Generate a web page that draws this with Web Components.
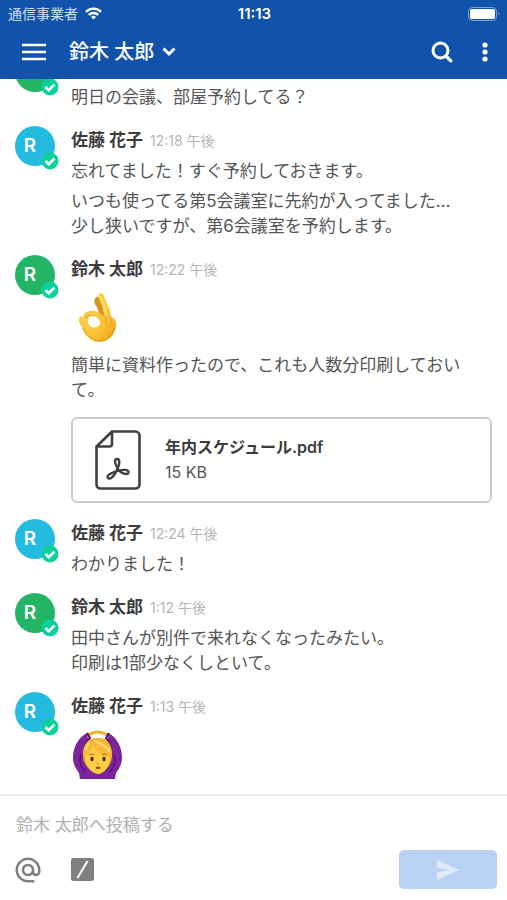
<!DOCTYPE html>
<html lang="ja">
<head>
<meta charset="utf-8">
<meta name="viewport" content="width=device-width, initial-scale=1">
<title>鈴木 太郎</title>
<style>
html, body { margin: 0; height: 100%; }
body { font-family: Inter, "Noto Sans CJK JP", sans-serif; font-size: 17px; line-height: 25px; color: #555; background: #fff; }
</style>
</head>
<body>
<chat-app>
  <status-bar slot="top">
    <span slot="carrier">通信事業者</span>
    <span slot="clock">11:13</span>
  </status-bar>
  <channel-header slot="top">鈴木 太郎</channel-header>
  <chat-message color="#22b565">
    <chat-text>明日の会議、部屋予約してる？</chat-text>
  </chat-message>
  <chat-message color="#25bae0">
    <span slot="name">佐藤 花子</span><span slot="time">12:18 午後</span>
    <chat-text>忘れてました！すぐ予約しておきます。</chat-text>
    <chat-text>いつも使ってる第5会議室に先約が入ってました…<br>少し狭いですが、第6会議室を予約します。</chat-text>
  </chat-message>
  <chat-message color="#22b565">
    <span slot="name">鈴木 太郎</span><span slot="time">12:22 午後</span>
    <chat-emoji kind="ok"></chat-emoji>
    <chat-text>簡単に資料作ったので、これも人数分印刷しておいて。</chat-text>
    <file-card><span slot="name">年内スケジュール.pdf</span><span slot="size">15 KB</span></file-card>
  </chat-message>
  <chat-message color="#25bae0">
    <span slot="name">佐藤 花子</span><span slot="time">12:24 午後</span>
    <chat-text>わかりました！</chat-text>
  </chat-message>
  <chat-message color="#22b565">
    <span slot="name">鈴木 太郎</span><span slot="time">1:12 午後</span>
    <chat-text>田中さんが別件で来れなくなったみたい。<br>印刷は1部少なくしといて。</chat-text>
  </chat-message>
  <chat-message color="#25bae0">
    <span slot="name">佐藤 花子</span><span slot="time">1:13 午後</span>
    <chat-emoji kind="woman"></chat-emoji>
  </chat-message>
  <message-composer slot="bottom" placeholder="鈴木 太郎へ投稿する"></message-composer>
</chat-app>

<script>
const define = (name, html, setup) => customElements.define(name, class extends HTMLElement {
  constructor() {
    super();
    this.attachShadow({ mode: "open" });
  }
  connectedCallback() {
    this.shadowRoot.innerHTML = html;
    if (setup) setup(this, this.shadowRoot);
  }
});

define("chat-app", `
<style>
:host { display: flex; flex-direction: column; height: 100vh; }
main { flex: 1; min-height: 0; overflow: hidden; display: flex; flex-direction: column; justify-content: flex-end; }
</style>
<slot name="top"></slot><main><slot></slot></main><slot name="bottom"></slot>`);

define("status-bar", `
<style>
:host { display: grid; grid-template-columns: 1fr auto 1fr; align-items: center; height: 27px; padding: 0 6px 0 8px; background: #1153ab; color: #fff; font-size: 14px; line-height: 20px; }
.left { display: flex; align-items: center; gap: 7px; color: #d3e0f2; }
.clock { font-weight: 600; font-size: 15px; }
.battery { justify-self: end; display: block; }
svg { display: block; }
</style>
<div class="left"><slot name="carrier"></slot>
<svg width="17" height="13" viewBox="0 0 17 13" fill="none" stroke="#fff" stroke-width="2.400"><path d="M1 4.800a10.500 10.500 0 0 1 15 0M3.800 8a6.500 6.500 0 0 1 9.400 0"/><path d="M8.500 12.500 6 9.900a3.700 3.700 0 0 1 5 0z" fill="#fff" stroke="none"/></svg></div>
<div class="clock"><slot name="clock"></slot></div>
<svg class="battery" width="33" height="14" viewBox="0 0 33 14"><rect x=".5" y=".5" width="28" height="13" rx="4" fill="none" stroke="#7fa3d3"/><rect x="2" y="2" width="25" height="10" rx="2" fill="#fff"/><path d="M30.500 5q2 2 0 4z" fill="#7fa3d3"/></svg>`);

define("channel-header", `
<style>
:host { display: flex; align-items: center; height: 52px; padding: 0 7px 2px 14px; box-sizing: border-box; background: #1153ab; color: #fff; }
button { display: flex; align-items: center; justify-content: center; padding: 0; border: 0; background: none; color: inherit; font: inherit; height: 40px; width: 40px; }
.title { width: auto; margin-left: 15px; gap: 8px; font-size: 20px; line-height: 28px; font-weight: 500; }
.search { margin-left: auto; }
.more { width: 30px; margin-left: 8px; }
</style>
<button aria-label="メニュー"><svg width="24" height="18" viewBox="0 0 24 18" stroke="#fff" stroke-width="2.600"><path d="M0 2h24M0 9h24M0 16h24"/></svg></button>
<button class="title"><slot></slot><svg width="14" height="10" viewBox="0 0 14 10" fill="none" stroke="#fff" stroke-width="3"><path d="m1.500 1.500 5.500 5.500 5.500-5.500"/></svg></button>
<button class="search" aria-label="検索"><svg width="22" height="22" viewBox="0 0 22 22" fill="none" stroke="#fff" stroke-linecap="round"><circle cx="9.500" cy="9.500" r="7.500" stroke-width="3"/><path d="m15 15 4.800 4.800" stroke-width="3.200"/></svg></button>
<button class="more" aria-label="その他"><svg width="6" height="22" viewBox="0 0 6 22" fill="#fff"><circle cx="3" cy="4" r="2.600"/><circle cx="3" cy="11" r="2.600"/><circle cx="3" cy="18" r="2.600"/></svg></button>`);

define("user-avatar", `
<style>
:host { display: block; position: relative; width: 40px; height: 40px; border-radius: 50%; background: var(--avatar-color); }
.letter { display: block; width: 30px; text-align: center; font-size: 19px; line-height: 39px; color: #fff; font-weight: 600; }
svg { position: absolute; right: -4px; bottom: -4px; }
</style>
<span class="letter"><slot></slot></span>
<svg width="18" height="18" viewBox="0 0 18 18"><circle cx="9" cy="9" r="8.500" fill="#09d19b"/><path d="m4.500 9 3.200 3.200 5.800-5.700" fill="none" stroke="#fff" stroke-width="2.700"/></svg>`);

define("chat-message", `
<style>
:host { display: grid; grid-template-columns: 40px minmax(0, 1fr); gap: 16px; flex: none; padding: 0 15px 16px 15px; }
:host(:last-of-type) { padding-bottom: 9px; }
header { display: flex; align-items: center; gap: 7px; height: 28px; margin-bottom: 5px; }
.name { color: #3c3c3f; font-weight: 700; }
.time { color: #b5b5b5; font-size: 14px; }
.content { display: flex; flex-direction: column; gap: 5px; }
</style>
<user-avatar></user-avatar>
<article><header><span class="name"><slot name="name"></slot></span><span class="time"><slot name="time"></slot></span></header><div class="content"><slot></slot></div></article>`,
(host, root) => {
  host.style.setProperty("--avatar-color", host.getAttribute("color"));
  if (host.querySelector("[slot=name]")) root.querySelector("user-avatar").textContent = "R";
});

define("chat-text", `<style>:host { display: block; }</style><slot></slot>`);

define("file-card", `
<style>
:host { display: flex; align-items: center; gap: 24px; height: 86px; box-sizing: border-box; margin-top: 9px; padding: 0 22px; border: 2px solid #cbcbcb; border-radius: 6px; }
svg { flex: none; }
.name { color: #3c3c3f; font-weight: 600; font-size: 16px; }
.size { font-size: 16px; }
</style>
<svg width="46" height="60" viewBox="0 0 46 60" fill="none" stroke="#3f3f42" stroke-linejoin="round">
<path d="M17 1.500h23.500a4 4 0 0 1 4 4v49a4 4 0 0 1-4 4h-35a4 4 0 0 1-4-4V16.500zV14a2.500 2.500 0 0 1-2.500 2.500h-13" stroke-width="2.600"/>
<path d="M22.500 37.500C19.500 33.500 19 29 22 29s3 4 .5 10c-2.500 6-6.500 10.500-9 9.500-3-1.500 1-5.500 7.500-7.200 7-1.800 12-2.300 12.500.8.400 3-5.500 2.500-9.500-1.500-2-2-2.500-3.500-2-5" stroke-width="2.400"/>
</svg>
<div><div class="name"><slot name="name"></slot></div><div class="size"><slot name="size"></slot></div></div>`);

const emojiArt = {
  ok: `<svg role="img" aria-label="OK" width="54" height="50" viewBox="0 0 54 50">
<defs><linearGradient id="skin" x1="0" y1="0" x2="1" y2="1"><stop offset="0" stop-color="#ffd65a"/><stop offset=".65" stop-color="#fcc437"/><stop offset="1" stop-color="#e89a16"/></linearGradient></defs>
<path d="M24 6c1-3 4-3 5 0l5 17-6 1c0-7-2-10-4-13-1-2-1-3 0-5z" fill="#d8941b"/>
<path d="M27 3c2-4 5-3 6 0l4 10c3 4 2 7 3 11 4 1 6 5 5 9-1 8-6 15-15 16-9 1-16-6-19-14-2-4-4-7-3-10 1-2 3-2 4 0 0-3 2-6 6-7 5-1 10 0 13 4l2-1C33 14 28 8 27 3zM18 24c-1 3-2 5 0 8 3 4 9 3 11-1 1-3-3-7-6-8-2-1-4 0-5 1z" fill="url(#skin)" fill-rule="evenodd"/>
<path d="M15 25c1-3 4-3 8-2m8-1c4 2 5 5 4 9m4-8c2 4 1 7-1 11M12 35c4 9 12 14 20 12 6-1 10-7 12-13" fill="none" stroke="#e0981a" stroke-width="1"/>
<path d="M29 3c2 7 6 10 6 19" fill="none" stroke="#ffe06f" stroke-width="2"/></svg>`,
  woman: `<svg role="img" aria-label="両手で丸を作る女性" width="54" height="50" viewBox="0 0 54 50">
<path d="M16 3C6 8 2 19 2 28c0 7 4 12 6 15l1 6h35l1-6c2-3 6-8 6-15 0-10-4-20-14-25z" fill="#7c249c"/>
<path d="M17 8C21 1 33 1 37 8l-4 8H21z" fill="#fff"/>
<path d="M17 3q10-5 19 0l2 5q-11-9-22 0z" fill="#f3ae2a"/>
<path d="M16 3l3 5q-4 4-5 9M38 3l-3 5q4 4 5 9" stroke="#541273" stroke-width="2" fill="none"/>
<path d="M10 24c-2 6 0 13 4 18M43 24c2 6 0 13-4 18" stroke="#5b137c" stroke-width="1.500" fill="none"/>
<path d="M12 25c0-11 5-17 15-17s14 6 14 17c0 8-4 13-8 16H21c-5-3-9-8-9-16z" fill="#efaa23"/>
<path d="M14 26c0-9 4-13 13-13 8 0 12 5 12 13 0 10-6 18-12 18s-13-8-13-18z" fill="#ffce45"/>
<path d="M12 26c0-13 7-19 15-18 9 1 14 8 14 19-9-1-15-5-19-11-1 4-4 8-10 10z" fill="#f7b738"/>
<path d="M23 11c6 2 13 5 16 11M18 13q-2 5-4 7" fill="none" stroke="#ffe071" stroke-width="2"/>
<path d="M18 25q3-2 5 0m8 0q3-2 5 0" stroke="#b36a10" fill="none"/>
<ellipse cx="21" cy="29" rx="1.700" ry="2.200" fill="#47290c"/><ellipse cx="33" cy="29" rx="1.700" ry="2.200" fill="#47290c"/>
<path d="M26 33q1 1 2 0" stroke="#d18b19" fill="none"/><path d="M24 38q3-3 6 0-3 2-6 0z" fill="#b03324"/></svg>`
};
define("chat-emoji", `<style>:host { display: block; padding: 5px 0; } svg { display: block; }</style>`,
  (host, root) => root.innerHTML += emojiArt[host.getAttribute("kind")]);

define("message-composer", `
<style>
:host { display: flex; flex-direction: column; gap: 8px; padding: 12px 10px 11px 16px; border-top: 2px solid #ebebeb; }
input { height: 34px; box-sizing: border-box; padding: 0; border: 0; outline: 0; background: none; font: inherit; color: #555; }
input::placeholder { color: #b0b0b0; opacity: 1; }
.tools { display: flex; align-items: center; gap: 30px; }
button { display: flex; align-items: center; justify-content: center; padding: 0; border: 0; background: none; width: 24px; height: 39px; }
.send { width: 98px; margin-left: auto; border-radius: 5px; background: #bad2f5; }
svg { flex: none; }
</style>
<input type="text" aria-label="メッセージ">
<div class="tools">
<button aria-label="メンション"><svg width="30" height="30" viewBox="0 0 24 24" fill="#808080"><path d="M12 2C6.480 2 2 6.480 2 12s4.480 10 10 10h5v-2h-5c-4.340 0-8-3.660-8-8s3.660-8 8-8 8 3.660 8 8v1.430c0 .79-.71 1.570-1.500 1.570s-1.500-.78-1.500-1.570V12c0-2.760-2.240-5-5-5s-5 2.240-5 5 2.240 5 5 5c1.380 0 2.640-.56 3.540-1.470.65.89 1.770 1.470 2.960 1.470 1.970 0 3.500-1.600 3.500-3.570V12c0-5.520-4.480-10-10-10zm0 13c-1.660 0-3-1.340-3-3s1.340-3 3-3 3 1.340 3 3-1.340 3-3 3z"/></svg></button>
<button aria-label="コマンド"><svg width="23" height="23" viewBox="0 0 23 23"><rect width="23" height="23" rx="2.500" fill="#808080"/><path d="M6.500 20 16.500 3" stroke="#fff" stroke-width="2"/></svg></button>
<button class="send" aria-label="送信"><svg width="22" height="20" viewBox="0 0 22 20" fill="#e0ebfb"><path d="M0 0 22 10 0 20V12.500L12 10 0 7.500z"/></svg></button>
</div>`,
(host, root) => root.querySelector("input").placeholder = host.getAttribute("placeholder"));
</script>
</body>
</html>
